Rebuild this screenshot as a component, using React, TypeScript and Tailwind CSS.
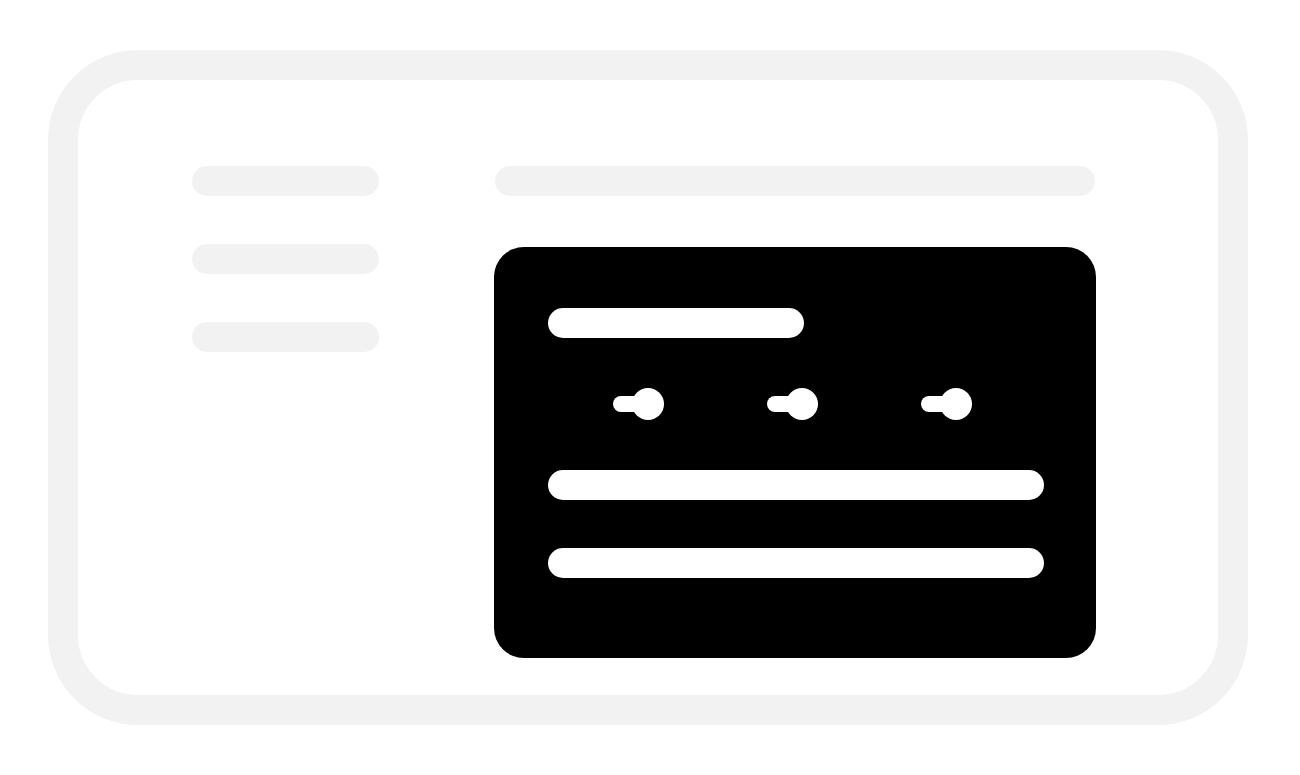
export default function App() {
  const knobs = [0, 1, 2];

  return (
    <div className="h-[775px] w-[1300px] overflow-hidden bg-white pl-[48px] pt-[50px]">
      <div className="flex h-[675px] w-[1200px] rounded-[90px] border-[30px] border-[#f2f2f2] pl-[114px] pt-[86px]">
        {/* sidebar */}
        <div className="flex w-[187px] flex-col gap-[48px]">
          <div className="h-[30px] rounded-full bg-[#f2f2f2]" />
          <div className="h-[30px] rounded-full bg-[#f2f2f2]" />
          <div className="h-[30px] rounded-full bg-[#f2f2f2]" />
        </div>

        {/* main */}
        <div className="ml-[115px] flex w-[602px] flex-col">
          <div className="mx-[1px] h-[30px] rounded-full bg-[#f2f2f2]" />

          <div className="mt-[51px] flex h-[411px] flex-col rounded-[30px] bg-black pl-[54px] pr-[52px] pt-[61px]">
            <div className="h-[30px] w-[256px] rounded-full bg-white" />

            <div className="ml-[65px] mt-[50px] flex h-[32px] items-center gap-[103px]">
              {knobs.map((k) => (
                <div key={k} className="flex items-center">
                  <div className="h-[16px] w-[30px] rounded-full bg-white" />
                  <div className="-ml-[11px] h-[32px] w-[32px] rounded-full bg-white" />
                </div>
              ))}
            </div>

            <div className="mt-[50px] h-[30px] rounded-full bg-white" />
            <div className="mt-[48px] h-[30px] rounded-full bg-white" />
          </div>
        </div>
      </div>
    </div>
  );
}
